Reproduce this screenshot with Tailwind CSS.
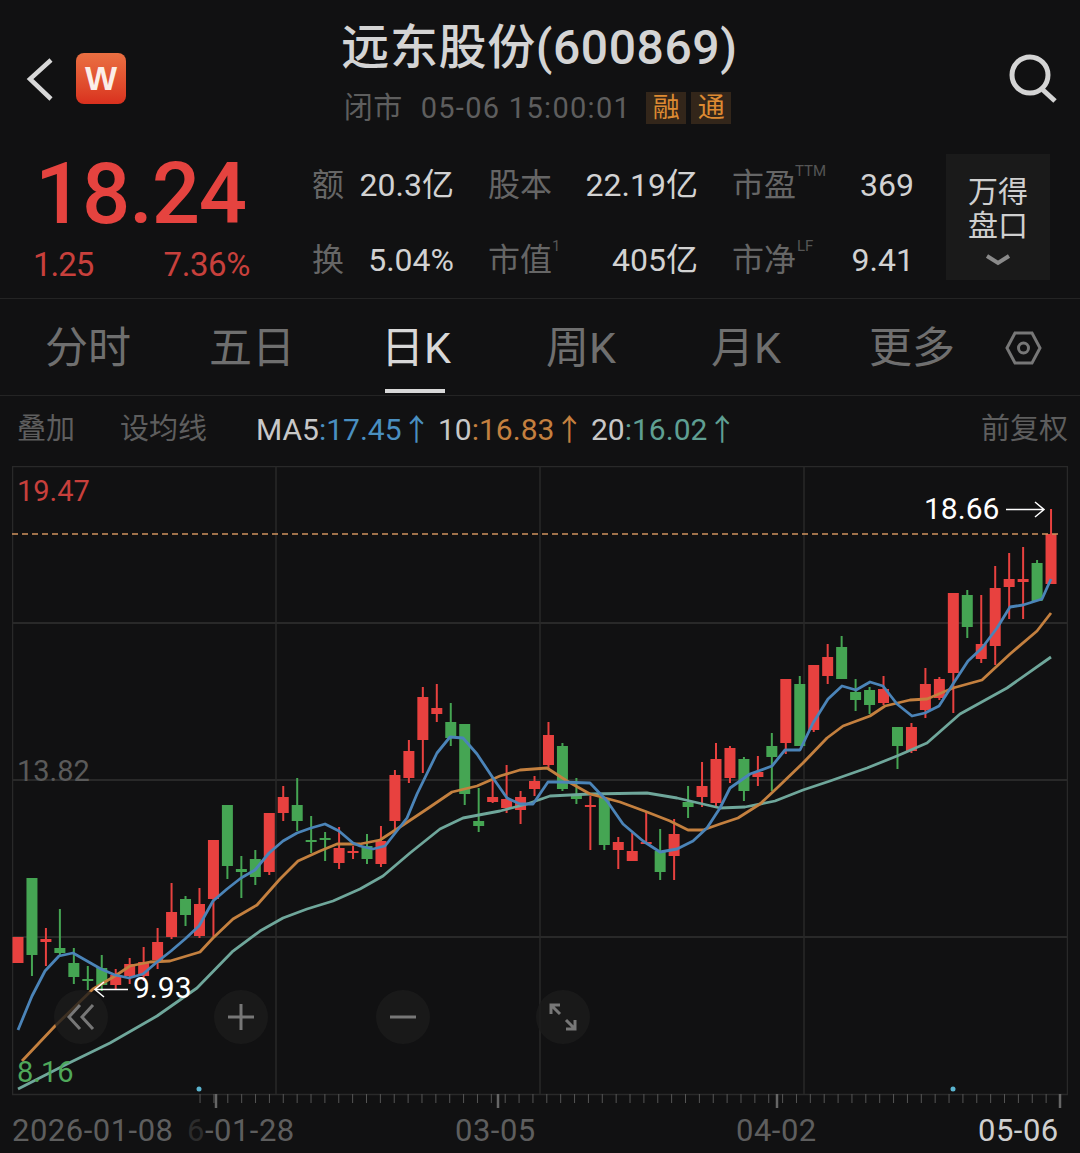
<!DOCTYPE html>
<html lang="zh-CN">
<head>
  <meta charset="UTF-8">
  <title>远东股份(600869)</title>
  <script src="https://cdn.jsdelivr.net/npm/@tailwindcss/browser@4"></script>
</head>
<body class="bg-[#111112]">
  <div class="w-[1080px] h-[1153px] overflow-hidden bg-[#111112] text-[#d2d2d2] [font-family:Roboto,'Noto_Sans_CJK_SC',sans-serif]">

    <!-- top bar -->
    <header class="relative h-[150px] flex justify-between px-[24px] pt-[53px]">
      <div class="flex items-start gap-[20px]">
        <svg class="w-[32px] h-[51px]" viewBox="24 53 32 51" fill="none" stroke="#d8d8d8" stroke-width="4.5"><path d="M51 60 L30 79 L51 99"/></svg>
        <div class="w-[50px] h-[51px] rounded-[8px] bg-gradient-to-b from-[#ea6f42] to-[#d9301e] flex items-center justify-center text-[#fbeee8] text-[34px] font-bold [font-family:'Liberation_Sans',sans-serif]">W</div>
      </div>
      <div class="absolute left-0 top-[18px] w-full flex flex-col items-center">
        <h1 class="text-[48px] leading-[60px] font-medium tracking-[0.6px] text-[#d4d4d4] ml-[-1px]">远东股份(600869)</h1>
        <div class="flex items-center mt-[14px] text-[29px] leading-[32px] text-[#5e5e5e] ml-[-5px]">
          <span class="tracking-[0.4px]">闭市</span>
          <span class="ml-[18px] tracking-[1.3px]">05-06 15:00:01</span>
          <span class="ml-[15px] w-[40px] h-[32px] flex items-center justify-center bg-[#33261a] text-[#dd8a32] text-[27px]">融</span>
          <span class="ml-[5px] w-[40px] h-[32px] flex items-center justify-center bg-[#33261a] text-[#dd8a32] text-[27px]">通</span>
        </div>
      </div>
      <svg class="w-[50px] h-[50px] mt-[1px] mr-[-2px]" viewBox="1009 54 50 50" fill="none" stroke="#d4d4d4" stroke-width="5"><circle cx="1031" cy="75" r="18"/><path d="M1044 90 L1056 101"/></svg>
    </header>

    <!-- quote -->
    <section class="h-[149px] flex border-b border-[#242424]">
      <div class="w-[312px] pl-[33px] pr-[62px]">
        <div class="text-[85px] leading-[90px] font-medium text-[#e5433f] pl-[2px] mt-[-1px] tracking-[-1.2px]">18.24</div>
        <div class="flex justify-between text-[33px] leading-[40px] text-[#c8403c] mt-[6px]">
          <span class="tracking-[-1px]">1.25</span><span class="tracking-[-0.4px]">7.36%</span>
        </div>
      </div>
      <div class="w-[602px] grid grid-cols-[142px_210px_182px] gap-x-[34px] grid-rows-[75px_75px] text-[32px] leading-[70px]">
        <div class="flex justify-between"><span class="text-[#666]">额</span><span>20.3亿</span></div>
        <div class="flex justify-between"><span class="text-[#666]">股本</span><span>22.19亿</span></div>
        <div class="flex justify-between"><span class="relative text-[#666]">市盈<sup class="absolute left-[63px] top-[21px] text-[15px] text-[#555]">TTM</sup></span><span>369</span></div>
        <div class="flex justify-between"><span class="text-[#666]">换</span><span>5.04%</span></div>
        <div class="flex justify-between"><span class="relative text-[#666]">市值<sup class="absolute left-[64px] top-[21px] text-[15px] text-[#555]">1</sup></span><span>405亿</span></div>
        <div class="flex justify-between"><span class="relative text-[#666]">市净<sup class="absolute left-[65px] top-[21px] text-[15px] text-[#555]">LF</sup></span><span>9.41</span></div>
      </div>
      <div class="ml-[32px] mt-[4px] w-[104px] h-[126px] bg-[#1a1a1a] flex flex-col items-center pt-[21px] text-[30px] leading-[34px] text-[#cfcfcf]">
        <span>万得</span><span>盘口</span>
        <svg class="w-[26px] h-[12px] mt-[11px]" viewBox="0 0 26 12" fill="none" stroke="#8a8a8a" stroke-width="4"><path d="M2 2 L13 9 L24 2"/></svg>
      </div>
    </section>

    <!-- period tabs -->
    <nav class="relative h-[97px] flex items-center border-b border-[#242424] text-[43px] text-[#6f6f6f] pl-[45px] pt-[2px]">
      <span class="w-[164px]">分时</span>
      <span class="w-[172px]">五日</span>
      <span class="relative w-[165px] text-[#d8d8d8]">日K<i class="absolute left-[4px] top-[73px] w-[60px] h-[4px] bg-[#d8d8d8]"></i></span>
      <span class="w-[165px]">周K</span>
      <span class="w-[158px]">月K</span>
      <span class="w-[136px]">更多</span>
      <svg class="w-[37px] h-[36px]" viewBox="0 0 37 36" fill="none" stroke="#777" stroke-width="3"><path d="M2 18 L10 3 H27 L35 18 L27 33 H10 Z"/><circle cx="18.5" cy="18" r="5"/></svg>
    </nav>

    <!-- indicator row -->
    <div class="h-[70px] flex items-center justify-between pl-[17px] pr-[12px] pb-[3px] text-[29px] text-[#5e5e5e]">
      <div class="flex items-center">
        <span class="w-[103px]">叠加</span>
        <span class="w-[136px]">设均线</span>
        <span class="w-[182px] text-[30px] text-[#c8c8c8]">MA5<span class="text-[#4a8fc0]">:17.45↑</span></span>
        <span class="w-[153px] text-[30px] text-[#c8c8c8]">10<span class="text-[#c4803f]">:16.83↑</span></span>
        <span class="text-[30px] text-[#c8c8c8]">20<span class="text-[#5f9f92]">:16.02↑</span></span>
      </div>
      <span>前复权</span>
    </div>

    <!-- kline chart -->
    <div class="relative mx-[12px] h-[642px]">
      <svg id="chart" class="absolute inset-0 w-full h-full" viewBox="12 465 1056 642" fill="none"></svg>

      <span class="absolute left-[5px] top-[6px] text-[29px] leading-[38px] text-[#c8403c]">19.47</span>
      <span class="absolute left-[5px] top-[286px] text-[29px] leading-[38px] text-[#5a5a5a]">13.82</span>
      <span class="absolute left-[5px] top-[587px] text-[29px] leading-[38px] text-[#4fa85a]">8.16</span>
      <span class="absolute left-[912px] top-[24px] text-[30px] leading-[38px] text-white">18.66</span>
      <span class="absolute left-[121px] top-[503px] text-[30px] leading-[38px] text-white">9.93</span>

      <button class="absolute left-[42px] top-[524px] w-[54px] h-[54px] rounded-full bg-[#1c1c1c]/80 flex items-center justify-center">
        <svg class="w-[30px] h-[30px]" viewBox="0 0 30 30" fill="none" stroke="#777" stroke-width="3"><path d="M14 3 L3 15 L14 27 M27 3 L16 15 L27 27"/></svg>
      </button>
      <button class="absolute left-[202px] top-[524px] w-[54px] h-[54px] rounded-full bg-[#1c1c1c]/80 flex items-center justify-center">
        <svg class="w-[28px] h-[28px]" viewBox="0 0 28 28" fill="none" stroke="#777" stroke-width="3"><path d="M14 1 V27 M1 14 H27"/></svg>
      </button>
      <button class="absolute left-[364px] top-[524px] w-[54px] h-[54px] rounded-full bg-[#1c1c1c]/80 flex items-center justify-center">
        <svg class="w-[28px] h-[6px]" viewBox="0 0 28 6" fill="none" stroke="#777" stroke-width="3"><path d="M1 3 H27"/></svg>
      </button>
      <button class="absolute left-[524px] top-[524px] w-[54px] h-[54px] rounded-full bg-[#1c1c1c]/80 flex items-center justify-center">
        <svg class="w-[30px] h-[30px]" viewBox="0 0 30 30" fill="none" stroke="#777" stroke-width="3"><path d="M3 3 L12 12 M3 12 V3 H12 M27 27 L18 18 M27 18 V27 H18"/></svg>
      </button>
    </div>

    <!-- dates -->
    <div class="flex pl-[12px] mt-[4px] text-[31px] leading-[38px] tracking-[0.5px] text-[#5e5e5e]">
      <span class="w-[175px]">2026-01-08</span>
      <span class="w-[268px]"><span class="text-[#2c2c2c]">6</span>-01-28</span>
      <span class="w-[281px]">03-05</span>
      <span class="w-[242px]">04-02</span>
      <span class="text-[#cfcfcf]">05-06</span>
    </div>
  </div>

  <script>
    // candles: colour, high, body top, body bottom, low
    const candles = [
      ["r",936,936,962,962],["g",877,877,954,975],["r",927,938,941,965],["g",908,947,952,955],["g",947,962,976,983],
      ["g",965,978,980,989],["g",954,967,984,990],["r",968,974,984,988],["r",957,963,975,983],["r",946,961,975,980],
      ["r",927,941,959,968],["r",882,911,936,938],["g",895,898,914,925],["r",887,903,935,937],["r",839,839,898,936],
      ["g",804,804,865,878],["g",855,868,871,897],["g",849,858,876,884],["r",812,812,871,874],["r",785,796,812,820],
      ["g",777,804,820,830],["g",815,839,841,852],["g",831,837,838,860],["r",826,847,862,868],["r",845,850,851,858],
      ["g",833,845,858,863],["r",825,840,863,866],["r",769,774,820,828],["r",739,750,777,782],["r",686,696,739,772],
      ["r",683,707,713,721],["g",702,721,737,745],["g",723,723,793,804],["g",787,820,825,831],["r",778,796,801,802],
      ["r",764,798,807,812],["r",790,796,809,823],["r",775,780,788,795],["r",721,734,764,768],["g",742,745,788,790],
      ["g",777,793,798,803],["r",795,804,806,849],["g",797,797,844,849],["r",836,841,849,868],["r",832,850,860,860],
      ["r",811,841,843,843],["g",828,850,871,879],["r",818,833,855,879],["g",785,801,806,817],["r",761,785,796,806],
      ["r",742,758,802,806],["r",745,747,777,782],["g",756,758,790,800],["r",755,771,776,785],["g",732,745,756,790],
      ["r",678,678,742,753],["g",675,683,745,745],["r",664,664,729,731],["r",643,656,675,683],["g",635,646,678,678],
      ["g",678,691,699,710],["g",686,689,704,713],["r",675,688,702,704],["g",726,726,745,768],["r",722,726,750,752],
      ["r",667,683,709,717],["r",676,678,697,699],["r",592,592,672,712],["g",589,594,626,637],["r",594,643,658,662],
      ["r",565,587,645,664],["r",552,578,586,618],["r",546,578,581,618],["g",559,562,600,600],["r",508,533,583,583]
    ];
    const ma5 = "18,1029 32,995 45,970 59,955 73,952 87,960 101,968 115,974 129,977 143,973 157,961 171,950 185,938 199,925 213,900 227,888 241,877 255,869 269,852 283,840 297,832 311,827 325,823 339,830 353,842 360,845 373,848 385,845 407,817 417,793 437,752 450,736 463,737 477,753 493,777 507,797 520,803 533,803 548,781 560,781 590,782 607,800 623,823 643,840 660,851 677,848 693,840 707,827 720,807 730,787 750,773 772,765 785,749 800,749 813,722 828,698 842,685 856,689 870,681 883,685 897,703 912,715 925,712 939,705 953,683 968,660 982,647 997,627 1010,606 1023,604 1042,598 1051,578";
    const ma10 = "22,1060 55,1025 93,988 115,975 130,965 150,961 170,960 200,951 213,937 233,918 257,904 280,878 298,860 320,850 337,843 360,843 380,839 403,824 427,808 452,791 477,785 500,775 520,769 547,767 567,780 590,793 620,801 647,811 670,820 688,829 703,829 720,823 738,817 760,803 777,787 803,762 827,737 843,725 870,715 885,705 910,699 927,698 953,687 982,679 1010,653 1037,630 1051,612";
    const ma20 = "18,1088 67,1063 110,1042 157,1015 197,987 233,950 260,930 283,917 307,908 333,900 360,888 383,875 410,852 440,828 463,817 500,810 527,803 550,795 590,793 647,792 677,797 720,807 745,806 775,800 803,789 830,780 867,767 897,755 927,742 960,713 1007,687 1051,656";

    let svg = "";
    // grid
    const gridColor = "#292929";
    svg += `<rect x="12.5" y="465.5" width="1055" height="628" stroke="${gridColor}" stroke-width="1.5"/>`;
    [622, 779, 936].forEach(y => svg += `<path d="M12 ${y}H1068" stroke="${gridColor}" stroke-width="2"/>`);
    [276, 540, 804].forEach(x => svg += `<path d="M${x} 465V1093" stroke="${gridColor}" stroke-width="1.5"/>`);
    // x axis ticks
    for (let x = 1060; x > 200; x -= 13.87) {
      svg += `<path d="M${x} 1093v9" stroke="#555" stroke-width="1"/>`;
    }
    [216, 498, 777, 1060].forEach(x => svg += `<path d="M${x} 1093v14" stroke="#666" stroke-width="2.5"/>`);
    // candles
    candles.forEach((c, i) => {
      const x = 18 + 13.96 * i;
      const col = c[0] === "r" ? "#e8413f" : "#45a553";
      svg += `<path d="M${x} ${c[1]}V${c[4]}" stroke="${col}" stroke-width="2"/>`;
      svg += `<rect x="${x - 5.5}" y="${c[2]}" width="11" height="${Math.max(c[3] - c[2], 2)}" fill="${col}"/>`;
    });
    // moving averages
    svg += `<polyline points="${ma20}" stroke="#6fa79b" stroke-width="2.8" stroke-linejoin="round"/>`;
    svg += `<polyline points="${ma10}" stroke="#c4803f" stroke-width="2.8" stroke-linejoin="round"/>`;
    svg += `<polyline points="${ma5}" stroke="#4b84b8" stroke-width="2.8" stroke-linejoin="round"/>`;
    // high line and markers
    svg += `<path d="M12 533H1062" stroke="#d0935f" stroke-width="1.5" stroke-dasharray="6 4"/>`;
    svg += `<path d="M1006 508.5H1044M1035 501L1044 508.5L1035 516" stroke="#fff" stroke-width="1.5"/>`;
    svg += `<path d="M128 988.5H95M104 981L95 988.5L104 996" stroke="#fff" stroke-width="1.5"/>`;
    svg += `<circle cx="199" cy="1088" r="2.5" fill="#5bb5d0"/><circle cx="953" cy="1088" r="2.5" fill="#5bb5d0"/>`;
    document.getElementById("chart").innerHTML = svg;
  </script>
</body>
</html>
